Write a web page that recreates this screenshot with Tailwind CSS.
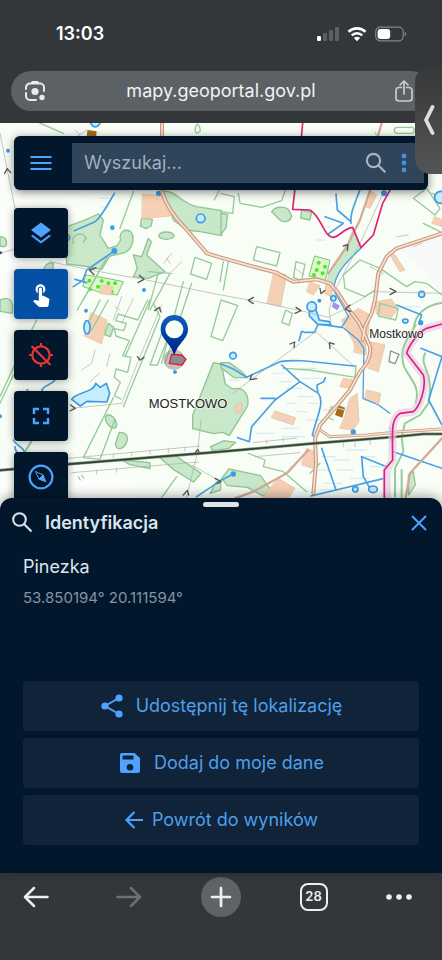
<!DOCTYPE html>
<html lang="pl">
  <head>
    <meta charset="UTF-8" />
    <meta name="viewport" content="width=device-width, initial-scale=1.0" />
    <title>Geoportal - Identyfikacja</title>
    <script src="https://cdn.jsdelivr.net/npm/@tailwindcss/browser@4"></script>
  </head>
  <body class="bg-[#33373a] font-['Inter',sans-serif] text-[#e3e7eb]">
    <div class="relative flex min-h-screen flex-col overflow-hidden">
      <!-- Status bar and address bar -->
      <header class="px-[11px] pb-3">
        <div class="flex h-[71px] items-center justify-between pr-6 pb-1 pl-[45px]">
          <span class="text-lg font-semibold text-white">13:03</span>
          <div class="flex items-center gap-2">
            <svg class="h-4 w-6" viewBox="0 0 24 16">
              <rect x="2" y="10" width="4" height="5" rx="1.2" fill="#fff" />
              <rect x="8" y="7" width="4" height="8" rx="1.2" fill="#5c6063" />
              <rect x="14" y="4" width="4" height="11" rx="1.2" fill="#5c6063" />
              <rect x="20" y="1" width="4" height="14" rx="1.2" fill="#5c6063" />
            </svg>
            <svg class="h-4 w-5" viewBox="0 0 20 16" fill="none" stroke="#fff" stroke-width="2.7">
              <path d="M1.5 5.8a12.2 12.2 0 0 1 17 0" />
              <path d="M4.8 9.4a7.4 7.4 0 0 1 10.4 0" />
              <path d="M10 15.2 6.9 12a4.4 4.4 0 0 1 6.2 0z" fill="#fff" stroke="none" />
            </svg>
            <svg class="h-4 w-8" viewBox="0 0 32 16">
              <rect x=".7" y="1.2" width="27.5" height="13.6" rx="4.5" fill="none" stroke="#85888a" stroke-width="1.2" />
              <rect x="2.6" y="3" width="12.6" height="10" rx="3" fill="#fff" />
              <path d="M29.8 5.8v4.4c1-.4 1.4-1.2 1.4-2.2s-.4-1.8-1.4-2.2z" fill="#85888a" />
            </svg>
          </div>
        </div>
        <div class="flex h-10 items-center justify-between rounded-full bg-[#5c6165] px-3">
          <button type="button" aria-label="Szukaj obrazem">
            <svg class="size-6" viewBox="0 0 24 24" fill="none" stroke="#e8eaec" stroke-width="2">
              <path d="M3 10V8.500a4 4 0 0 1 4-4h10a4 4 0 0 1 4 4V12M3 14v3a4 4 0 0 0 4 4h6" stroke-linecap="round" />
              <path d="M7.500 4.500 9 2h6l1.500 2.500z" fill="#e8eaec" stroke="none" />
              <circle cx="12" cy="12.500" r="3.600" fill="#e8eaec" stroke="none" />
              <circle cx="19" cy="18.500" r="2.700" fill="#e8eaec" stroke="none" />
            </svg>
          </button>
          <a href="#" class="pl-2 text-lg text-[#f1f2f3]">mapy.geoportal.gov.pl</a>
          <button type="button" aria-label="Udostępnij stronę">
            <svg class="h-6 w-8" viewBox="0 0 32 24" fill="none" stroke="#c9cccf" stroke-width="1.700" stroke-linecap="round" stroke-linejoin="round">
              <path d="M14.500 8.500H12a3 3 0 0 0-3 3V19a3 3 0 0 0 3 3h10a3 3 0 0 0 3-3v-7.500a3 3 0 0 0-3-3h-2.500M17 15V2m-4 4 4-4 4 4" />
            </svg>
          </button>
        </div>
      </header>

      <!-- Map -->
      <main class="relative -mb-4 flex-1 overflow-hidden bg-[#f8fef5]">
        <svg class="absolute inset-0 size-full" viewBox="0 9 1326 1173" preserveAspectRatio="xMidYMin slice" fill="none" stroke-linejoin="round" stroke-linecap="round">
          <defs>
            <linearGradient id="pin" x1="0" y1="0" x2="0" y2="1">
              <stop offset="0" stop-color="#1262bd" />
              <stop offset=".5" stop-color="#003ea5" />
              <stop offset="1" stop-color="#001f7a" />
            </linearGradient>
            <radialGradient id="light">
              <stop offset="0" stop-color="#fff" />
              <stop offset="1" stop-color="#fff" stop-opacity="0" />
            </radialGradient>
          </defs>
          <ellipse cx="60" cy="380" rx="260" ry="260" fill="url(#light)" />
          <ellipse cx="200" cy="1120" rx="420" ry="90" fill="url(#light)" />
          <path d="M1326 345 1195 390l80 60 30 50 21 10z" fill="#f8f8f8" />

          <!-- woods and meadows -->
          <g fill="#c9e8c9" stroke="#8fc592" stroke-width="4">
            <path d="M195 322l55-20 45-20 15 18-10 45 25 40 25-7 12-18c-7-25 13-35 30-25 13 15 8 50-17 63l-45 10-25 40-55-10-50-6z" />
            <path d="M220 370c-8-25 25-40 38-15l-8 12" fill="none" />
            <path d="M130 455q5-30 30-26l-3 28z" />
            <path d="M490 213c40 0 55 37 100 47l75 12v75l-65-12-40-5-40-30z" />
            <path d="M400 405l25 5 20-55 9 10-14 40 55 50-50 20-45-5 12-25z" />
            <path d="M425 295l32 3-3 20-16 8-17-8z" />
            <ellipse cx="499" cy="347" rx="23" ry="11" />
            <path d="M815 275c10-15 35-18 50-7l10 20c-5 20-25 20-35 12l-15-15z" />
            <path d="M905 270l30 6-6 24-27-6z" />
            <path d="M663 280l20 3-5 40-15 20z" />
            <path d="M1058 322l25 62-50 50-32 60-26 8 10-42 55-80z" stroke="none" />
            <path d="M0 350c15 0 20 10 20 20s-8 12-20 8zM0 540q30-15 38 15v25l-38-6z" />
            <path d="M640 728l24 4 12 60 22 15c35-10 50 20 45 50l-40 65-15 25-20-10-28 4-62-15v-40z" />
            <path d="M663 728h25l35 25 20 20h-40l-40-30z" />
            <path d="M478 1012l50-4 75 52-22 26-60-37z" />
            <path d="M665 1075l22-28 95 20 35 50-30 10-45-25-60-5z" />
            <path d="M1225 1065l15-10 6 40-20 30z" />
            <path d="M320 885c15-5 30 15 30 30 0 12-15 12-25 0s-12-25-5-30zM358 937c20 0 28 10 22 30-8 20-30 28-34 5z" />
            <path d="M632 980l40-18 35 5-20 18-50 7zM630 1120l20-35 12 5v20z" />
            <path d="M365 1020l85 8v18l-60-12zM325 610l16 12-10 28-18-6z" />
          </g>
          <g fill="#dcf8c9" stroke="#82bd86" stroke-width="3">
            <path d="M258 465l52 8 60 12-18 40-52-8-50-17z" />
            <path d="M945 408l45 13-14 60-48-13z" />
          </g>
          <g stroke="#4bea27" stroke-width="12">
            <path d="M268 482h.1M305 483h.1M345 490h.1M270 508h.1M294 500h.1M325 490h.1M335 515h.1M956 428h.1M975 440h.1M950 450h.1M968 460h.1M942 465h.1" />
          </g>

          <!-- built-up areas -->
          <g fill="#f5d0b4" stroke="#dfc0a0" stroke-width="2">
            <path d="M428 222l58 4 25 62-85 8z" />
            <path d="M273 578l48 22-16 72-52-24zM303 495l35 5-5 25-32-4z" />
            <path d="M822 455l38 10-18 95-40-10zM930 485l30 12-20 28-20-10zM980 490l-8 30 20 10 10-30z" />
            <path d="M1115 215l15 10-20 40-15-5zM1165 395l20 10 30 45-15 5zM1125 545l50-8 18 30-18 25-45-10z" />
            <path d="M1025 600l50-35 35 20-5 55-12 60-28-25zM1110 665l45 10-20 80-30-10zM1065 665l30 5 5 35-38-8z" />
            <path d="M1100 810l42 10-5 30-42-10zM1030 775l35 5-15 25-30-5zM1050 835l22-15 5 85-18 25-40-5 15-35z" />
            <path d="M825 873l62 20-8 22-64-22zM707 855l18-6v26l-16 5zM920 985l25 10-5 50-35-10zM835 1075l50 30-20 30h-80z" />
            <path d="M1305 290l21 10v20l-30-10z" />
          </g>
          <path d="M262 30l28 4-2 20h-28zM1015 855l20 8-8 30-22-8z" fill="#a9691b" />

          <!-- parcel boundaries -->
          <g stroke="#98ca9b" stroke-width="4">
            <path d="M110 5l80 35M400 215l-40 110M663 200l-20 40M40 765L0 850M110 600L60 700 0 830M232 570l90-160M250 540l45-80" />
            <path d="M585 412l50 18-15 48-48-16zM595 15q14 20-5 25c-10-10 0-35 5-25" />
            <path d="M325 540l-50 90M300 540l-30 60M510 460l-60 110M475 458l-30 110M450 540l-75 170M575 490l-80 240M550 485l-65 245M445 455l70 5" />
            <path d="M443 540l-30 60-58-18-8 20 32 8-8 22-28-6 5 22 40 14-20 45 25 5-10 45-35-10-5 25 18 15-18 40 20 10M340 833l-90 180 50 5 45-120M460 550l20 40-110 270M500 600l-50 135h22l45-115" />
            <path d="M663 540l-30 110 35 12 45-105-50-17M663 220l40 10-5 50-35-5M715 220l5 30 65 12 60-20 10-30" />
            <path d="M770 380l70 18-10 40-70-18zM888 425l27 8-10 48-25-8zM685 425l-15 85M670 425l-10 60" />
            <path d="M857 570l20 10-10 35-22-8zM1080 420l-50 45 5 40 60 25 30-20M1080 420l60 25 80 55 25-15 35 5 46 35" />
            <path d="M1240 235l40-30 40 60-15 20zM1270 310l50 25M1295 220l31 10M1140 550l55 15-8 35-52-12z" />
            <path d="M850 745l80 5 135 22 3-35M995 860l40 10M995 860l-15 30 20 10M960 1030l-30 30M745 1000l50 20-5 20 60 15 70 60M530 1070l-50 70" />
            <path d="M1247 615c-30 50-50 70-35 125 20 40 50 60 35 110M1275 700c-20 40 30 50 10 150l-25 35-45 25-10 40 5 45-25 50v85" stroke-width="6" />
            <path d="M1326 548c-60 10-80 40-85 75M1205 1050v90M100 955l-25 40" stroke-width="6" />
            <rect x="1183" y="22" width="60" height="18" rx="9" />
          </g>

          <!-- marsh hatching -->
          <g stroke="#b9dbee" stroke-width="2">
            <path d="M300 235h25M305 260h20M635 300h25M640 320h20M820 760h30M840 785h35M900 745h50M905 775h60M860 805h45M895 830h45M860 850h30M925 850h30M830 900h40M890 875h30M850 925h45M920 900h50M970 870h25M770 940h50M845 950h70M690 780h30" />
            <path d="M965 1010h40M955 1050h30M975 1090h50M960 1110h60M1010 1050h50M1080 1010h45M1040 990h60M1110 1040h40M1050 1075h55M1200 690h30M1210 560h50M1000 1020h50M970 320h20M950 360h25" />
          </g>

          <!-- water -->
          <g stroke="#4a9fe6" stroke-width="5">
            <path d="M343 220c-23 40-38 70-58 85l-62 27M343 393l-83 57-12 32-28 18M225 478l35 10" />
            <path d="M1079 212c-15 40-30 70-26 98M1008 222l4 48 41 35M975 290l55 20-45 32" />
            <path d="M1083 384c-40 40-78 70-82 126l45 80-20 30 49 40 17 25-3 150 47 20 33 25" stroke-width="4" />
            <path d="M1025 622l-70-10-12 25-30 0-8-3-8 28" />
            <path d="M663 732l37 15 40 25 100-47c60-10 120 5 225 13" />
            <path d="M845 735l55 50 55 35c15 20 5 50-8 90l-10 35 12 10M900 785l-75 55-70 80-7 45-35-12M825 835l-42 0M953 815l-2-20 20-10 5-12" />
            <path d="M965 985l43 125-75 18M1008 1110l145-35M1085 1010l5 60 20 35 10 10M1085 1010l75 30M1180 995l146 50M1190 555l75 30-8 25M1263 685l63 25M1326 710l-40 130 40 75M590 1130l45-30 28-20M665 1080l35-18" />
            <path d="M165 780c-15 20-40 15-40 38M80 810h4M40 960c10 20 35 20 35 45-15 5-30-10-30-25" />
          </g>
          <g fill="#c6edfb" stroke="#3f9ae6" stroke-width="5">
            <path d="M215 838c15-23 65-18 72-48l14 12 18-12 10 30-8 26-60-2-20 14z" />
            <path d="M928 550c10-10 25 0 20 20l10 30 30 5 5 10-40-2-25-25z" />
            <circle cx="602" cy="295" r="13" /><ellipse cx="261" cy="622" rx="9" ry="20" /><path d="M272 10q14 22 28 0" />
            <circle cx="699" cy="707" r="10" /><circle cx="1000" cy="535" r="8" /><ellipse cx="1119" cy="1108" rx="13" ry="10" /><circle cx="1066" cy="1108" r="8" />
            <circle cx="1265" cy="523" r="9" /><ellipse cx="1216" cy="603" rx="8" ry="6" /><circle cx="1322" cy="232" r="18" /><path d="M200 340q16 12 4 22" />
            <circle cx="935" cy="560" r="14" />
          </g>
          <g fill="#3f9ae6">
            <circle cx="337" cy="323" r="7" /><circle cx="432" cy="510" r="6" /><circle cx="24" cy="92" r="6" /><circle cx="525" cy="756" r="6" /><circle cx="258" cy="572" r="6" />
            <circle cx="343" cy="393" r="9" /><circle cx="476" cy="220" r="8" /><circle cx="1152" cy="220" r="9" /><circle cx="0" cy="889" r="6" /><circle cx="700" cy="1062" r="8" />
            <circle cx="1060" cy="936" r="8" /><circle cx="958" cy="542" r="6" /><circle cx="1262" cy="608" r="8" />
          </g>
          <path d="M1000 545l20 12-8 14-16-10z" fill="#9a98e0" />

          <!-- roads -->
          <g stroke="#cc9880" stroke-width="12">
            <path d="M486 9v60M486 215c10 35 35 75 75 115l60 70 42 13 97 27 70 18 50 27 70-7 40 12 25 30 25 40 35 45 20 40 15 35c5 30-15 60-30 75l-30 55-50 60-40 45-15 40 3 75-8 90" />
            <path d="M1326 340l-136 45-30 25-25 50-10 80-10 40-20 40-7 40" />
            <path d="M960 930l30 20 110-5 100-10 126-8" stroke-width="9" />
          </g>
          <g stroke="#f7e3d2" stroke-width="5">
            <path d="M486 9v60M486 215c10 35 35 75 75 115l60 70 42 13 97 27 70 18 50 27 70-7 40 12 25 30 25 40 35 45 20 40 15 35c5 30-15 60-30 75l-30 55-50 60-40 45-15 40 3 75-8 90" />
            <path d="M1326 340l-136 45-30 25-25 50-10 80-10 40-20 40-7 40" />
            <path d="M960 930l30 20 110-5 100-10 126-8" stroke-width="4" />
          </g>
          <g stroke="#d3ab98" stroke-width="7">
            <path d="M1145 10l-12 40M1112 205l-32 95-40 80-55 80M1326 955l-96 105-15 85M925 990l-65 70-100 55-55 20" />
          </g>

          <!-- power lines -->
          <g stroke="#a9aca9" stroke-width="2">
            <path d="M0 40l22 110 23 115M0 400l40-12M150 425l120 25 160 28 233 47 85 15 155 32M903 572l82 20 53-27 82-50 206 5M948 635L698 820M948 635l115 105M485 555l-65 155-55 140-150 15M603 900l-10 95-35 145M575 1035l88 50M1145 230l-60 130-80 150-18 60 5 35" />
            <path d="M490 430l25-30M515 455l30-30M500 415l10 15M340 600l25-70M365 610l35-75M345 560l15 10M245 750l30-20 10-40M320 740l10-40M270 785l28-25M885 445l28 20M880 470l20 15M1190 350l35-5M1240 380l25-10M1110 440l40 20-10 10M225 30l15 15M230 50l30-20M1125 35l10 30" />
            <path d="M205 1015l395-37M215 1058l380-32M760 968l130-14M765 1010l135-12M340 1002v12M395 996v12M450 991v12M505 986v12M555 981v12M800 960v10M850 955v10M1030 968v12M1065 968v12M1110 962v12M290 1050v12M350 1045v12" />
          </g>
          <path d="M14 160l8-14 10 12M288 444l-20 6 14 14M418 466l14 12-18 10M760 532l-15 9 15 10M888 562l15 10-18 8M1170 505l18 9-18 10M1050 555l-14 12 16 8M870 672l14-6-2 16M755 765l-5 14 20-3M1002 672l-14-4 2 18M464 572l14-10 5 14M412 710l8 10 12-8M212 855l14 10-16 8M584 1000l9-12 6 12M550 1125l12-14 4 14M645 1075l18 10-12 6M1030 378l14-4-2 18M960 505l3 16 12-10" stroke="#565956" stroke-width="4" />
          <path d="M0 398h2" stroke="#565956" stroke-width="9" />

          <!-- railway -->
          <path d="M0 1051l200-18 463-38 282-25 235-19 90-9h56" stroke="#8b9588" stroke-width="9" />
          <path d="M0 1051l200-18 463-38 282-25 235-19 90-9h56" stroke="#304631" stroke-width="5" />
          <path d="M1170 920v45M1180 920v45M235 1070l6 10M245 1065l6 10" stroke="#6b6e6b" stroke-width="2" />
          <path d="M1172 693l25 10-12 28-18-6z" fill="#fff" stroke="#8d8f8d" stroke-width="4" />

          <!-- administrative border -->
          <path d="M1326 612l-46 13c-30 15-55 55-60 75l50 65c10 35-10 95-30 110l-40 5c-30 20-22 60-22 140l-18 30v95" stroke="#e6cbe6" stroke-opacity=".65" stroke-width="24" />
          <g stroke="#e0207c" stroke-width="5">
            <path d="M908 9l-4 45M885 205l-7 63 52 2c35 20 40 80 70 82 20-2 30-27 58-30l25 61 37-38 28-95 28-50" />
            <path d="M1326 612l-46 13c-30 15-55 55-60 75l50 65c10 35-10 95-30 110l-40 5c-30 20-22 60-22 140l-25 30v95" />
          </g>

          <g class="font-['Liberation_Sans',sans-serif]" fill="#222" stroke="#fff" stroke-opacity=".6" stroke-width="5" paint-order="stroke">
            <text x="446" y="865" font-size="39">MOSTKOWO</text>
            <text x="1108" y="655" font-size="36">Mostkowo</text>
          </g>

          <!-- located point -->
          <circle cx="522" cy="719" r="31" fill="#8c7f7f" fill-opacity=".5" />
          <path d="M515 703l30 2 13 13-12 17-38-5z" fill="#8c8c8c" stroke="#dc1c2c" stroke-width="4" />
          <path d="M523 585c-23 0-41 18-41 42 0 32 30 40 41 80 11-40 41-48 41-80 0-24-18-42-41-42z" fill="url(#pin)" />
          <circle cx="523" cy="628" r="27" fill="#f8fef5" />
        </svg>

        <div class="relative px-[14px] pt-[13px]">
          <form class="flex rounded-md bg-[#03172c] py-[7px] pr-1 shadow-[0_2px_10px_rgba(0,0,0,0.5)]">
            <button type="button" aria-label="Menu" class="flex w-[58px] items-center pl-[15px] text-[#4da3ff]">
              <svg class="h-5 w-6" viewBox="0 0 24 20" fill="none" stroke="currentColor" stroke-width="2.200">
                <path d="M1.500 4h21M1.500 10h21M1.500 16h21" />
              </svg>
            </button>
            <div class="flex h-10 min-w-0 flex-1 items-center bg-[#30445a] pr-4 pl-3">
              <input type="search" aria-label="Wyszukaj" placeholder="Wyszukaj..." class="min-w-0 flex-1 bg-transparent text-lg outline-none placeholder:text-[#a3afbc]" />
              <button type="submit" aria-label="Szukaj" class="px-2">
                <svg class="size-6" viewBox="0 0 24 24" fill="none" stroke="#a9b4c0" stroke-width="2.200">
                  <circle cx="9.500" cy="9.500" r="6.600" />
                  <path d="M14.300 14.300l7 7" />
                </svg>
              </button>
              <button type="button" aria-label="Więcej opcji" class="pl-1">
                <svg class="h-5 w-2" viewBox="0 0 8 20" fill="#4a90e2">
                  <circle cx="4" cy="3" r="2.400" /><circle cx="4" cy="10" r="2.400" /><circle cx="4" cy="17" r="2.400" />
                </svg>
              </button>
            </div>
          </form>

          <div class="mt-[18px] flex w-[54px] flex-col gap-[11px] text-[#4da3ff]">
            <button type="button" aria-label="Warstwy" class="flex h-[50px] items-center justify-center rounded-sm bg-[#03172c] shadow-[0_1px_8px_rgba(0,0,0,0.4)]">
              <svg class="size-6" viewBox="0 0 24 24" fill="currentColor">
                <path d="M12 1.500 2 9l10 7.600L22 9z" />
                <path d="M3.600 13.700 2 15l10 7.600L22 15l-1.600-1.300L12 20z" />
              </svg>
            </button>
            <button type="button" aria-label="Identyfikacja" class="flex h-[50px] items-center justify-center rounded-sm bg-[#0350a5] shadow-[0_1px_8px_rgba(0,0,0,0.4)]">
              <svg class="size-[26px]" viewBox="0 0 24 24" fill="#fff">
                <path d="M9 11.240V7.500C9 6.120 10.120 5 11.500 5S14 6.120 14 7.500v3.740c1.210-.81 2-2.180 2-3.740C16 5.010 13.990 3 11.500 3S7 5.010 7 7.500c0 1.560.79 2.930 2 3.740zm9.840 4.630-4.540-2.260c-.17-.07-.35-.11-.54-.11H13v-6c0-.83-.67-1.500-1.500-1.500S10 6.670 10 7.500v10.740l-3.430-.72c-.08-.01-.15-.03-.24-.03-.31 0-.59.13-.79.33l-.79.800 4.940 4.940c.27.27.65.44 1.060.44h6.790c.75 0 1.330-.55 1.440-1.280l.75-5.270c.01-.07.02-.14.02-.2 0-.62-.38-1.160-.91-1.380z" />
              </svg>
            </button>
            <button type="button" aria-label="Lokalizacja wyłączona" class="flex h-[50px] items-center justify-center rounded-sm bg-[#03172c] text-[#ea3434] shadow-[0_1px_8px_rgba(0,0,0,0.4)]">
              <svg class="size-[26px]" viewBox="0 0 26 26" fill="none" stroke="currentColor" stroke-width="2.200">
                <circle cx="13" cy="13" r="8.700" />
                <path d="M13 1v3.500M13 21.500V25M1 13h3.500M21.500 13H25M3.500 4l19 19" />
              </svg>
            </button>
            <button type="button" aria-label="Pełny ekran" class="flex h-[50px] items-center justify-center rounded-sm bg-[#03172c] shadow-[0_1px_8px_rgba(0,0,0,0.4)]">
              <svg class="size-5" viewBox="0 0 20 20" fill="none" stroke="currentColor" stroke-width="2.400">
                <path d="M3 8V3h5M12 3h5v5M17 12v5h-5M8 17H3v-5" />
              </svg>
            </button>
            <button type="button" aria-label="Kompas" class="flex h-[50px] items-center justify-center rounded-sm bg-[#03172c] shadow-[0_1px_8px_rgba(0,0,0,0.4)]">
              <svg class="size-7" viewBox="0 0 28 28" fill="none" stroke="currentColor" stroke-width="2.200">
                <circle cx="14" cy="14" r="11.400" />
                <path d="M8.500 8.500 16 12l-4 4z" stroke-width="1" />
                <path d="M19.500 19.500 11.500 16.500l5-5z" fill="currentColor" stroke="none" />
              </svg>
            </button>
          </div>
        </div>
      </main>

      <!-- Identify sheet -->
      <section class="relative rounded-t-xl bg-[#03172c] pt-1 pb-7 shadow-[0_-2px_12px_rgba(0,0,0,0.35)]">
        <div class="mx-auto h-[5px] w-9 rounded-full bg-[#dfe3e6]"></div>
        <div class="flex h-8 items-center pr-3 pl-[11px]">
          <svg class="size-6" viewBox="0 0 24 24" fill="none" stroke="#dbe3ea" stroke-width="2.100">
            <circle cx="8.500" cy="8.500" r="6.300" />
            <path d="M13 13l7.500 7.500" />
          </svg>
          <h1 class="flex-1 pl-[10px] text-lg font-semibold text-[#dbe5ee]">Identyfikacja</h1>
          <button type="button" aria-label="Zamknij" class="text-[#4da3ff]">
            <svg class="size-[22px]" viewBox="0 0 22 22" fill="none" stroke="currentColor" stroke-width="2">
              <path d="M4 4l14 14M18 4 4 18" />
            </svg>
          </button>
        </div>
        <div class="px-[23px] pt-4">
          <h2 class="text-lg leading-6 text-[#dbe5ee]">Pinezka</h2>
          <p class="mt-[7px] text-[15px] leading-6 text-[#8494a3]">53.850194° 20.111594°</p>
          <div class="mt-[71px] flex flex-col gap-[7px] text-lg text-[#4f9fec]">
            <button type="button" class="flex h-[50px] items-center justify-center gap-3 rounded bg-[#102338]">
              <svg class="size-6" viewBox="0 0 24 24" fill="#4da3ff" stroke="#4da3ff" stroke-width="2">
                <path d="M19 4 5 12l14 8" fill="none" />
                <circle cx="19" cy="4" r="2.600" /><circle cx="5" cy="12" r="2.600" /><circle cx="19" cy="20" r="2.600" />
              </svg>
              Udostępnij tę lokalizację
            </button>
            <button type="button" class="flex h-[50px] items-center justify-center gap-3 rounded bg-[#102338]">
              <svg class="size-6" viewBox="0 0 24 24" fill="#4da3ff">
                <path fill-rule="evenodd" d="M16.500 2H4a2 2 0 0 0-2 2v16a2 2 0 0 0 2 2h16a2 2 0 0 0 2-2V7zM12 19.500a3.300 3.300 0 1 1 0-6.600 3.300 3.300 0 0 1 0 6.600zM15.500 8.500h-11v-4h11z" />
              </svg>
              Dodaj do moje dane
            </button>
            <button type="button" class="flex h-[50px] items-center justify-center gap-2 rounded bg-[#102338]">
              <svg class="size-5" viewBox="0 0 20 20" fill="none" stroke="#4da3ff" stroke-width="2.200">
                <path d="M19 10H3M10.500 2 2.500 10l8 8" />
              </svg>
              Powrót do wyników
            </button>
          </div>
        </div>
      </section>

      <!-- Browser navigation -->
      <nav class="flex h-[87px] items-start justify-between px-4 pt-1 text-[#eceef0]">
        <button type="button" aria-label="Wstecz" class="flex size-10 items-center justify-center">
          <svg class="h-6 w-7" viewBox="0 0 28 24" fill="none" stroke="currentColor" stroke-width="2.500" stroke-linecap="round" stroke-linejoin="round">
            <path d="M25.500 12H3M12 3 3 12l9 9" />
          </svg>
        </button>
        <button type="button" aria-label="Dalej" class="flex size-10 items-center justify-center text-[#6c7073]">
          <svg class="h-6 w-7" viewBox="0 0 28 24" fill="none" stroke="currentColor" stroke-width="2.500" stroke-linecap="round" stroke-linejoin="round">
            <path d="M2.500 12H25M16 3l9 9-9 9" />
          </svg>
        </button>
        <button type="button" aria-label="Nowa karta" class="flex size-10 items-center justify-center rounded-full bg-[#5e6367]">
          <svg class="size-6" viewBox="0 0 24 24" fill="none" stroke="currentColor" stroke-width="2.700" stroke-linecap="round">
            <path d="M12 3v18M3 12h18" />
          </svg>
        </button>
        <button type="button" aria-label="Karty" class="flex size-10 items-center justify-center">
          <span class="flex size-7 items-center justify-center rounded-lg border-2 text-[13px] font-semibold">28</span>
        </button>
        <button type="button" aria-label="Więcej" class="flex size-10 items-center">
          <svg class="h-6 w-[26px]" viewBox="0 0 26 24" fill="currentColor">
            <circle cx="3" cy="12" r="2.800" /><circle cx="13" cy="12" r="2.800" /><circle cx="23" cy="12" r="2.800" />
          </svg>
        </button>
      </nav>

      <!-- Slide-over handle -->
      <button type="button" aria-label="Pokaż panel" class="absolute top-[66px] right-0 flex h-[108px] w-[27px] items-center justify-center rounded-l-2xl bg-linear-to-b from-[#37383a] to-[#555557]">
        <svg class="h-8 w-3" viewBox="0 0 12 32" fill="none" stroke="#dededf" stroke-width="3.800" stroke-linecap="round" stroke-linejoin="round">
          <path d="M9.500 3 3 16l6.500 13" />
        </svg>
      </button>
    </div>
  </body>
</html>
